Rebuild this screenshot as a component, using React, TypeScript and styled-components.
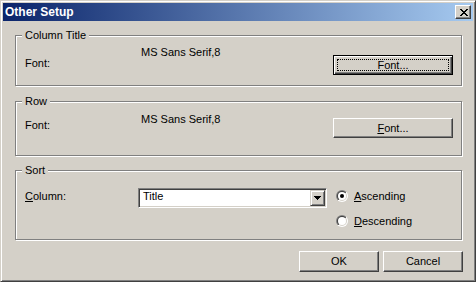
import { useId } from 'react'
import styled, { createGlobalStyle } from 'styled-components'

const GlobalStyle = createGlobalStyle`
  html, body {
    margin: 0;
    padding: 0;
  }
  body {
    width: 476px;
    height: 282px;
    overflow: hidden;
    background: #d4d0c8;
    font-family: "Liberation Sans", Arial, sans-serif;
    font-size: 11px;
    color: #000;
  }
`

// classic marlett bitmaps
const CLOSE_GLYPH = ['XX....XX', '.XX..XX.', '..XXXX..', '...XX...', '..XXXX..', '.XX..XX.', 'XX....XX']
const DOWN_GLYPH = ['XXXXXXX', '.XXXXX.', '..XXX..', '...X...']

const PixelGlyph = ({ rows }: { rows: string[] }) => (
  <svg width={rows[0].length} height={rows.length} shapeRendering="crispEdges" style={{ display: 'block' }}>
    {rows.flatMap((row, y) =>
      row.split('').map((c, x) => (c === 'X' ? <rect key={`${x}-${y}`} x={x} y={y} width={1} height={1} fill="#000" /> : null))
    )}
  </svg>
)

const RadioMark = ({ checked }: { checked?: boolean }) => {
  const id = useId().replace(/:/g, '')
  return (
    <svg width={12} height={12} viewBox="0 0 12 12" style={{ display: 'block', flex: 'none' }}>
      <defs>
        <linearGradient id={`o${id}`} x1="0" y1="0" x2="1" y2="1">
          <stop offset="0.5" stopColor="#808080" />
          <stop offset="0.5" stopColor="#ffffff" />
        </linearGradient>
        <linearGradient id={`i${id}`} x1="0" y1="0" x2="1" y2="1">
          <stop offset="0.5" stopColor="#404040" />
          <stop offset="0.5" stopColor="#d4d0c8" />
        </linearGradient>
      </defs>
      <circle cx={6} cy={6} r={6} fill={`url(#o${id})`} />
      <circle cx={6} cy={6} r={5} fill={`url(#i${id})`} />
      <circle cx={6} cy={6} r={4} fill="#fff" />
      {checked && <circle cx={6} cy={6} r={2} fill="#000" />}
    </svg>
  )
}

const OtherSetup = () => {
  return (
    <Window>
      <TitleBar>
        <Title>Other Setup</Title>
        <CloseButton>
          <PixelGlyph rows={CLOSE_GLYPH} />
        </CloseButton>
      </TitleBar>
      <Body>
        <Group $h={51}>
          <Caption>Column Title</Caption>
          <Label $top={21} $w={116}>Font:</Label>
          <Value $top={10}>MS Sans Serif,8</Value>
          <PushButton $top={19} $default>
            Font...
          </PushButton>
        </Group>

        <Group $h={55} $gap={15}>
          <Caption>Row</Caption>
          <Label $top={17} $w={116}>Font:</Label>
          <Value $top={11}>MS Sans Serif,8</Value>
          <PushButton $top={16}>
            <u>F</u>ont...
          </PushButton>
        </Group>

        <Group $h={70} $gap={14}>
          <Caption>Sort</Caption>
          <Label $top={19} $w={113}>
            <u>C</u>olumn:
          </Label>
          <ComboBox>
            <ComboText>Title</ComboText>
            <DropButton>
              <PixelGlyph rows={DOWN_GLYPH} />
            </DropButton>
          </ComboBox>
          <RadioList>
            <RadioRow>
              <RadioMark checked />
              <span>
                <u>A</u>scending
              </span>
            </RadioRow>
            <RadioRow>
              <RadioMark />
              <span>
                <u>D</u>escending
              </span>
            </RadioRow>
          </RadioList>
        </Group>

        <Footer>
          <DialogButton>OK</DialogButton>
          <DialogButton>Cancel</DialogButton>
        </Footer>
      </Body>
    </Window>
  )
}

const Window = styled.div`
  box-sizing: border-box;
  width: 476px;
  height: 282px;
  display: flex;
  flex-direction: column;
  padding: 2px;
  border: 1px solid;
  border-color: #d4d0c8 #404040 #404040 #d4d0c8;
  box-shadow: inset 1px 1px #fff, inset -1px -1px #808080;
  background: #d4d0c8;
`
const TitleBar = styled.div`
  height: 18px;
  display: flex;
  align-items: center;
  justify-content: space-between;
  padding: 0 2px;
  background: linear-gradient(to right, #0a246a, #a6caf0);
`
const Title = styled.span`
  color: #fff;
  font-weight: bold;
  font-size: 12px;
  line-height: 18px;
`
const CloseButton = styled.div`
  box-sizing: border-box;
  width: 16px;
  height: 14px;
  display: flex;
  align-items: center;
  justify-content: center;
  padding-left: 1px;
  background: #d4d0c8;
  border: 1px solid;
  border-color: #fff #404040 #404040 #fff;
  box-shadow: inset -1px -1px #808080;
`
const Body = styled.div`
  flex: 1;
  display: flex;
  flex-direction: column;
  padding: 14px 11px 0 12px;
`
const Group = styled.div<{ $h: number; $gap?: number }>`
  position: relative;
  box-sizing: border-box;
  height: ${p => p.$h}px;
  margin-top: ${p => p.$gap ?? 0}px;
  display: flex;
  align-items: flex-start;
  padding: 0 8px 0 9px;
  border: 1px solid #808080;
  box-shadow: inset 1px 1px #fff, 1px 1px #fff;
`
const Caption = styled.span`
  position: absolute;
  top: -7px;
  left: 6px;
  padding: 0 3px;
  line-height: 13px;
  background: #d4d0c8;
`
const Label = styled.div<{ $top: number; $w: number }>`
  flex: none;
  width: ${p => p.$w}px;
  margin-top: ${p => p.$top}px;
  line-height: 13px;
`
const Value = styled.div<{ $top: number }>`
  flex: 1;
  margin-top: ${p => p.$top}px;
  line-height: 13px;
`
const PushButton = styled.div<{ $top: number; $default?: boolean }>`
  position: relative;
  box-sizing: border-box;
  flex: none;
  width: 120px;
  height: 20px;
  margin-top: ${p => p.$top}px;
  display: flex;
  align-items: center;
  justify-content: center;
  line-height: 13px;
  background: #d4d0c8;
  border: 1px solid;
  border-color: ${p => (p.$default ? '#000' : '#fff #404040 #404040 #fff')};
  box-shadow: ${p => (p.$default ? 'inset 1px 1px #fff, inset -1px -1px #404040, inset -2px -2px #808080' : 'inset -1px -1px #808080')};

  ${p =>
    p.$default &&
    `&::after {
      content: '';
      position: absolute;
      inset: 3px;
      border: 1px dotted #000;
    }`}
`
const ComboBox = styled.div`
  box-sizing: border-box;
  flex: none;
  width: 189px;
  height: 20px;
  margin-top: 17px;
  margin-right: 9px;
  display: flex;
  align-items: flex-start;
  background: #fff;
  border: 1px solid;
  border-color: #808080 #fff #fff #808080;
  box-shadow: inset 1px 1px #404040, inset -1px -1px #d4d0c8;
  padding: 1px;
`
const ComboText = styled.span`
  flex: 1;
  padding-left: 3px;
  line-height: 13px;
`
const DropButton = styled.div`
  box-sizing: border-box;
  flex: none;
  width: 15px;
  height: 16px;
  display: flex;
  align-items: center;
  justify-content: center;
  background: #d4d0c8;
  border: 1px solid;
  border-color: #d4d0c8 #404040 #404040 #d4d0c8;
  box-shadow: inset 1px 1px #fff, inset -1px -1px #808080;
`
const RadioList = styled.div`
  margin-top: 19px;
  display: flex;
  flex-direction: column;
  gap: 13px;
`
const RadioRow = styled.div`
  height: 12px;
  display: flex;
  align-items: center;
  gap: 6px;
  line-height: 13px;
`
const Footer = styled.div`
  display: flex;
  justify-content: flex-end;
  gap: 4px;
  margin-top: 11px;
  margin-right: -1px;
`
const DialogButton = styled.div`
  box-sizing: border-box;
  width: 80px;
  height: 21px;
  display: flex;
  align-items: center;
  justify-content: center;
  line-height: 13px;
  background: #d4d0c8;
  border: 1px solid;
  border-color: #fff #404040 #404040 #fff;
  box-shadow: inset -1px -1px #808080;
`

const App = () => (
  <>
    <GlobalStyle />
    <OtherSetup />
  </>
)

export default App
